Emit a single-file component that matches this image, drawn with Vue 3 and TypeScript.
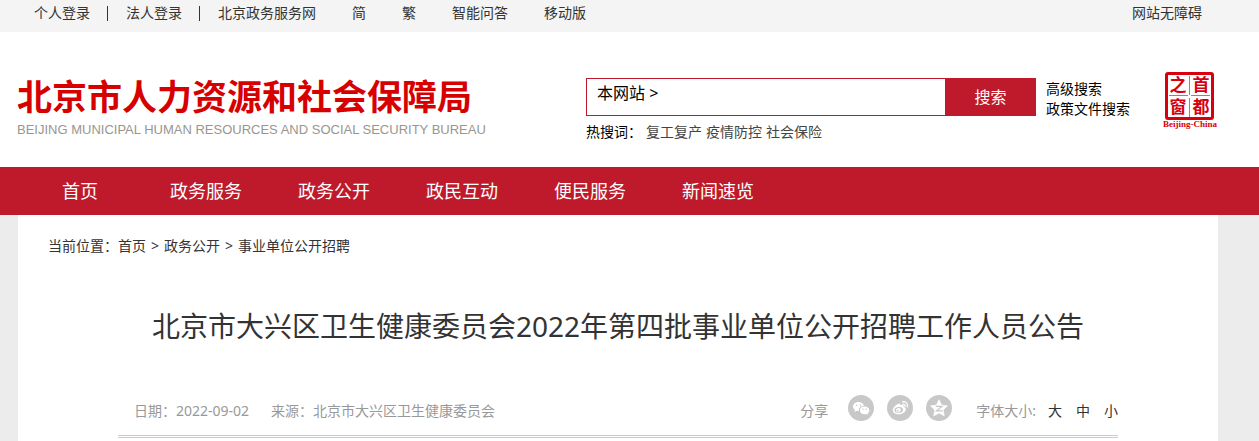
<script setup lang="ts">
import { ref } from 'vue'

interface TopLink {
  label: string
  divided: boolean
}

const topLinks: TopLink[] = [
  { label: '个人登录', divided: true },
  { label: '法人登录', divided: true },
  { label: '北京政务服务网', divided: false },
  { label: '简', divided: false },
  { label: '繁', divided: false },
  { label: '智能问答', divided: false },
  { label: '移动版', divided: false },
]
const navItems: string[] = ['首页', '政务服务', '政务公开', '政民互动', '便民服务', '新闻速览']
const hotWords: string[] = ['复工复产', '疫情防控', '社会保险']
const crumbs: string[] = ['首页', '政务公开', '事业单位公开招聘']
const sizes: string[] = ['大', '中', '小']
const keyword = ref('')
</script>

<template>
  <div class="page">
    <div class="topbar">
      <div class="topbar-inner">
        <nav class="top-links" aria-label="快捷入口">
          <a v-for="l in topLinks" :key="l.label" href="#" :class="{ divided: l.divided }">{{ l.label }}</a>
        </nav>
        <a href="#">网站无障碍</a>
      </div>
    </div>

    <header class="header">
      <a class="brand" href="#">
        <span class="brand-cn">北京市人力资源和社会保障局</span>
        <span class="brand-en">BEIJING MUNICIPAL HUMAN RESOURCES AND SOCIAL SECURITY BUREAU</span>
      </a>
      <div class="search">
        <form class="search-box" @submit.prevent>
          <button type="button" class="scope">本网站 &gt;</button>
          <input v-model="keyword" type="text" aria-label="搜索关键词" />
          <button type="submit" class="go">搜索</button>
        </form>
        <div class="hot">
          <span class="hot-label">热搜词：</span>
          <a v-for="w in hotWords" :key="w" href="#">{{ w }}</a>
        </div>
      </div>
      <div class="search-more">
        <a href="#">高级搜索</a>
        <a href="#">政策文件搜索</a>
      </div>
      <a class="seal" href="#" aria-label="首都之窗">
        <svg width="56" height="58" viewBox="0 0 56 58">
          <rect x="4.5" y="1.500" width="46" height="45" rx="1.500" fill="none" stroke="#d7000f" stroke-width="3" />
          <path d="M27.500 4v19M27.500 26v19M7 23.500h19M29 23.500h19" stroke="#e0626a" stroke-width="1" />
          <g class="seal-cn">
            <text x="16" y="19">之</text>
            <text x="39" y="19">首</text>
            <text x="16" y="41">窗</text>
            <text x="39" y="41">都</text>
          </g>
          <text class="seal-en" x="28" y="55">Beijing-China</text>
        </svg>
      </a>
    </header>

    <nav class="nav" aria-label="主导航">
      <a v-for="n in navItems" :key="n" href="#">{{ n }}</a>
    </nav>

    <main class="content">
      <nav class="crumbs" aria-label="当前位置">
        <span>当前位置：</span>
        <template v-for="(c, i) in crumbs" :key="c">
          <span v-if="i > 0" class="sep">&gt;</span>
          <a href="#">{{ c }}</a>
        </template>
      </nav>
      <h1>北京市大兴区卫生健康委员会2022年第四批事业单位公开招聘工作人员公告</h1>
      <div class="meta">
        <span class="date">日期：2022-09-02</span>
        <span class="source">来源：北京市大兴区卫生健康委员会</span>
        <span class="share-label">分享</span>
        <div class="share">
          <button type="button" aria-label="分享到微信">
            <svg width="26" height="26" viewBox="0 0 26 26">
              <circle cx="13" cy="13" r="13" fill="#c8c8c8" />
              <path d="M10.500 7C7.400 7 5 9 5 11.600c0 1.500.8 2.700 2 3.500L6.500 17l2.200-1.200c.7.200 1.400.3 2.200.3-.7-3 1.800-5.300 5-5.200C15.400 8.600 13.200 7 10.500 7z" fill="#fff" />
              <path d="M16.600 11.600c-2.700 0-4.700 1.700-4.700 3.800s2 3.800 4.700 3.800c.6 0 1.200-.1 1.700-.3l1.800 1-.5-1.600c1-.7 1.700-1.700 1.700-2.900 0-2.100-2.100-3.800-4.700-3.800z" fill="#fff" />
              <g fill="#c8c8c8"><circle cx="8.700" cy="10.300" r=".8" /><circle cx="12.500" cy="10.300" r=".8" /><circle cx="15" cy="14.300" r=".7" /><circle cx="18.200" cy="14.300" r=".7" /></g>
            </svg>
          </button>
          <button type="button" aria-label="分享到微博">
            <svg width="26" height="26" viewBox="0 0 26 26">
              <circle cx="13" cy="13" r="13" fill="#c8c8c8" />
              <path d="M11.800 8.700c1.200-.4 1.800.3 1.500 1.700 2-.8 3.900-.5 3.500 1.600 1.700.5 2.300 1.400 1.900 2.900-.6 2.400-3.500 4.300-7 4.300-3.400 0-5.900-1.600-5.900-4 0-2.500 3-5.600 6-6.500z" fill="#fff" />
              <ellipse cx="11.700" cy="15" rx="4.300" ry="3" transform="rotate(-8 11.700 15)" fill="#c8c8c8" />
              <ellipse cx="11.300" cy="15.200" rx="2.500" ry="2.100" transform="rotate(-20 11.300 15.200)" fill="#fff" />
              <circle cx="10.700" cy="15.700" r=".9" fill="#c8c8c8" />
              <path d="M15.500 6.800c3.300-.7 5.700 2 4.700 5.200M15.700 9.100c1.600-.3 2.700.8 2.300 2.400" fill="none" stroke="#fff" stroke-width="1.200" stroke-linecap="round" />
            </svg>
          </button>
          <button type="button" aria-label="分享到QQ空间">
            <svg width="26" height="26" viewBox="0 0 26 26">
              <circle cx="13" cy="13" r="13" fill="#c8c8c8" />
              <path d="M13 4.800l2.500 5.300 5.900.8-4.300 4 1.100 5.800-5.200-2.800-5.200 2.800 1.100-5.800-4.300-4 5.900-.8z" fill="#fff" stroke="#fff" stroke-width=".8" stroke-linejoin="round" />
              <path d="M9.800 11.400h6l-5.300 4.400h6.200" fill="none" stroke="#c8c8c8" stroke-width="1.300" />
            </svg>
          </button>
        </div>
        <div class="sizes">
          <span>字体大小:</span>
          <button v-for="s in sizes" :key="s" type="button">{{ s }}</button>
        </div>
      </div>
    </main>
  </div>
</template>

<style>
body {
  margin: 0;
  background: #ececec;
}
</style>

<style scoped>
.page {
  font-family: "Noto Sans", "Noto Sans CJK SC", sans-serif;
  font-size: 14px;
  line-height: 20px;
  color: #333;
}
a {
  color: inherit;
  text-decoration: none;
}
button {
  padding: 0;
  border: 0;
  background: none;
  font: inherit;
  color: inherit;
  cursor: pointer;
}
.topbar {
  height: 32px;
  background: #f4f4f4;
}
.topbar-inner {
  display: flex;
  justify-content: space-between;
  max-width: 1168px;
  padding: 3px 34px 0;
}
.top-links {
  display: flex;
  gap: 36px;
}
.top-links .divided {
  position: relative;
}
.top-links .divided::after {
  content: "";
  position: absolute;
  right: -18px;
  top: 3px;
  width: 1px;
  height: 15px;
  background: #333;
}
.header {
  display: flex;
  align-items: flex-start;
  height: 135px;
  padding-left: 17px;
  background: #fff;
}
.brand {
  display: flex;
  flex-direction: column;
  width: 569px;
  padding-top: 43px;
  white-space: nowrap;
}
.brand-cn {
  font-size: 35px;
  font-weight: 700;
  line-height: 44px;
  color: #d70000;
}
.brand-en {
  font-family: "Liberation Sans", Arial, sans-serif;
  font-size: 13px;
  line-height: 22px;
  color: #999690;
}
.search {
  width: 450px;
  padding-top: 46px;
  color: #000;
}
.search-box {
  display: flex;
  height: 38px;
}
.search-box .scope {
  padding: 0 4px 8px 10px;
  border: 1px solid #be1a2b;
  border-right: 0;
  font-size: 16px;
}
.search-box input {
  flex: 1;
  min-width: 0;
  border: 1px solid #be1a2b;
  border-width: 1px 0;
  outline: 0;
  font-size: 16px;
  background: #fff;
}
.search-box .go {
  width: 91px;
  background: #be1a2b;
  color: #fff;
  font-size: 16px;
}
.hot {
  display: flex;
  gap: 4px;
  padding-top: 6px;
  color: #444;
}
.hot-label {
  color: #000;
}
.search-more {
  display: flex;
  flex-direction: column;
  width: 116px;
  padding: 47px 0 0 10px;
  color: #000;
}
.seal {
  padding-top: 40px;
}
.seal svg {
  display: block;
}
.seal text {
  fill: #d7000f;
  text-anchor: middle;
}
.seal-cn {
  font-family: "Noto Sans CJK SC", sans-serif;
  font-size: 17px;
  font-weight: 700;
}
.seal-en {
  font-family: "Liberation Serif", serif;
  font-size: 9px;
  font-weight: 700;
}
.nav {
  display: flex;
  padding-left: 34px;
  background: #be1a2b;
  color: #fff;
  font-size: 18px;
  line-height: 48px;
}
.nav a {
  padding: 0 28px;
}
.nav a:first-child {
  padding-right: 44px;
}
.content {
  max-width: 1200px;
  min-height: 226px;
  margin-left: 18px;
  background: #fff;
}
.crumbs {
  display: flex;
  padding: 21px 30px 0;
}
.sep {
  margin: 0 5px;
}
h1 {
  margin: 50px 0 0;
  text-align: center;
  font-size: 28px;
  font-weight: 400;
  line-height: 40px;
}
.meta {
  display: flex;
  align-items: flex-end;
  margin: 49px 100px 0;
  padding: 0 0 14px 16px;
  border-bottom: 3px double #ccc;
  color: #999;
}
.source {
  margin: 0 auto 0 22px;
}
.share {
  display: flex;
  gap: 13px;
  margin: 0 24px 0 20px;
}
.share svg {
  display: block;
}
.sizes {
  display: flex;
  gap: 14px;
}
.sizes span {
  margin-right: -2px;
}
.sizes button {
  color: #333;
}
</style>
